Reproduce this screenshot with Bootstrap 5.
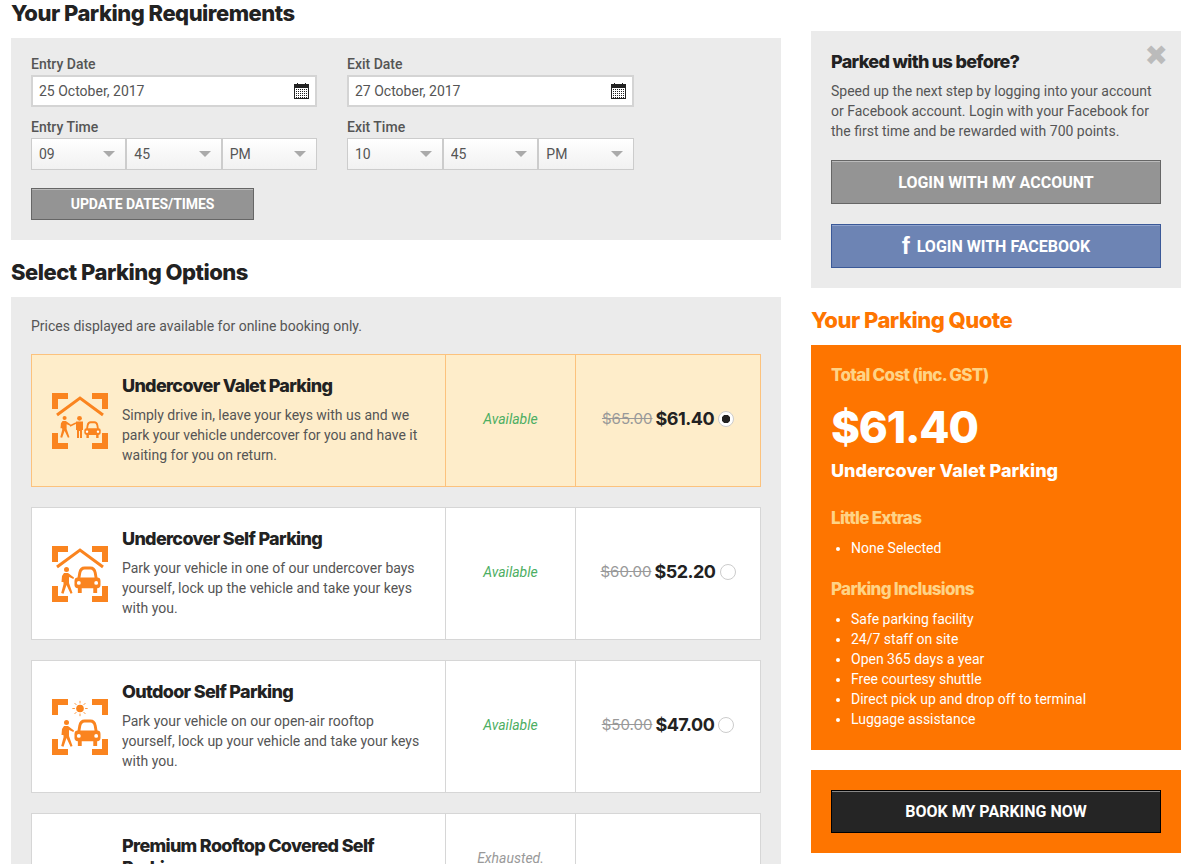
<!DOCTYPE html>
<html lang="en">
<head>
    <meta charset="UTF-8">
    <meta name="viewport" content="width=device-width, initial-scale=1.0">
    <title>Select Parking Options</title>
    <link rel="stylesheet" href="https://cdn.jsdelivr.net/npm/bootstrap@5.3.3/dist/css/bootstrap.min.css">
    <style>
        html, body { height: 864px; overflow: hidden; }
        body { font-family: Roboto, "Liberation Sans", sans-serif; font-size: 14px; line-height: 20px; color: #555; background: #fff; }
        .svg-defs { position: absolute; width: 0; height: 0; }
        .page-wrap { display: flex; gap: 30px; padding-left: 11px; width: 1181px; }
        .main-col { width: 770px; flex: none; }
        .side-col { width: 370px; flex: none; padding-top: 31px; }

        .head-font { font-family: Inter, "Liberation Sans", sans-serif; font-weight: 800; color: #222; letter-spacing: -.5px; margin: 0; }
        .sec-title { font-size: 22px; line-height: 26px; }
        .sec-first { margin-bottom: 12px; }
        .sec-next { margin: 19px 0 12px; }
        .grey-panel { background: #ebebeb; padding: 20px; }

        .req-panel { height: 202px; padding-top: 16px; }
        .req-grid { display: flex; gap: 30px; }
        .req-field { width: 286px; }
        .req-field:last-child { width: 287px; }
        .req-label { font-weight: 500; color: #555; margin: 0 0 1px; display: block; line-height: 20px; }
        .date-box { position: relative; margin-bottom: 10px; }
        .date-box .form-control { height: 32px; border: 2px solid #d4d4d4; border-radius: 0; padding: 0 6px; font-size: 14px; color: #555; }
        .cal-icon { position: absolute; right: 8px; top: 8px; }
        .time-row { display: flex; }
        .time-row .form-select { height: 32px; border: 1px solid #ccc; border-radius: 0; padding: 0 7px; font-size: 14px; color: #555; flex: 1 1 0; min-width: 0;
            background-color: #fff;
            background-image: url("data:image/svg+xml,%3Csvg xmlns='http://www.w3.org/2000/svg' width='12' height='6'%3E%3Cpath d='M0 0h12L6 6z' fill='%23aaa'/%3E%3C/svg%3E"), linear-gradient(#fff, #f1f1f1);
            background-repeat: no-repeat; background-position: right 10px center, 0 0; background-size: 12px 6px, 100% 100%; }

        .act-btn { border-radius: 0; color: #fff; font-family: Roboto, sans-serif; font-weight: 700; text-transform: uppercase; display: block; text-align: center; padding: 0; }
        .act-btn:hover { color: #fff; }
        .btn-grey { background: #949494; border: 1px solid #666; box-shadow: inset 0 1px 0 #bbb; }
        .btn-grey:hover { background: #888; border-color: #666; }
        .btn-update { width: 223px; height: 32px; font-size: 14px; margin-top: 18px; letter-spacing: -.1px; }
        .btn-wide { width: 330px; height: 44px; font-size: 16px; padding-top: 1px; }
        .btn-fb { background: #6d84b4; border: 1px solid #3b5998; margin-top: 20px; box-shadow: inset 0 1px 0 #8fa3cc; }
        .btn-fb:hover { background: #627aac; border-color: #3b5998; }
        .fb-f { font-family: "Liberation Sans", sans-serif; font-size: 24px; line-height: 1; margin-right: 7px; vertical-align: -2px; text-transform: none; }
        .btn-book { background: #252525; border: 1px solid #000; box-shadow: inset 0 1px 0 #888; height: 43px; }
        .btn-book:hover { background: #333; border-color: #000; }

        .note-text { margin: 0 0 19px; line-height: 18px; }
        .opt-card { display: flex; background: #fff; border: 1px solid #d6d6d6; height: 133px; margin-bottom: 20px; }
        .opt-card.picked { background: #feedca; border-color: #fcc27d; }
        .opt-info { width: 413px; flex: none; display: flex; align-items: center; gap: 14px; padding: 0 20px 2px; }
        .opt-icon { flex: none; margin-top: 2px; }
        .opt-title { font-size: 18px; line-height: 22px; margin-bottom: 8px; letter-spacing: -.7px; }
        .opt-desc { margin: 0; }
        .opt-status { width: 130px; flex: none; display: flex; align-items: center; justify-content: center; border-left: 1px solid #d6d6d6; font-style: italic; color: #4cae62; padding-bottom: 4px; }
        .opt-price { flex: 1 1 auto; display: flex; align-items: center; justify-content: center; border-left: 1px solid #d6d6d6; padding-bottom: 4px; }
        .picked .opt-status, .picked .opt-price { border-left-color: #fcc27d; }
        .old-price { font-family: Inter, sans-serif; font-size: 15px; color: #999; text-decoration: line-through; margin-right: 3px; }
        .new-price { font-family: Inter, sans-serif; font-weight: 700; font-size: 18px; color: #222; letter-spacing: -.5px; }
        .opt-radio { width: 16px; height: 16px; margin: 0 0 0 4px; border: 1px solid #ccc; flex: none; }
        .opt-radio:checked { background-color: #fff; border-color: #ccc; background-image: radial-gradient(circle, #222 0 4px, transparent 4.5px); }
        .tall-card { height: 156px; }
        .tall-card .opt-status { color: #999; padding-bottom: 66px; }
        .tall-card .opt-info { align-items: flex-start; padding-top: 21px; }
        .tall-card .opt-icon { margin-top: 29px; }

        .login-panel { position: relative; height: 257px; padding-top: 20px; }
        .login-title { font-size: 18px; line-height: 22px; margin-bottom: 8px; letter-spacing: -.7px; }
        .login-text { margin: 0 0 19px; }
        .close-mark { position: absolute; right: 13px; top: 11px; font-size: 28px; line-height: 28px; color: #bbb; font-family: "DejaVu Sans", sans-serif; }
        .quote-title { color: #fe7500; font-size: 22px; line-height: 26px; margin: 19px 0 12px; }
        .quote-panel { background: #fe7500; color: #fff; padding: 20px; }
        .quote-sub { color: #fed386; font-size: 17px; line-height: 22px; letter-spacing: -.7px; }
        .quote-amount { color: #fff; font-size: 44px; line-height: 52px; margin-top: 15px; letter-spacing: -1.2px; }
        .quote-name { color: #fff; font-size: 18px; line-height: 24px; margin-top: 6px; letter-spacing: 0; }
        .quote-list { margin: 9px 0 0; padding-left: 20px; }
        .extra-head { margin-top: 24px; }
        .incl-head { margin-top: 20px; }
        .quote-body { height: 405px; padding-top: 19px; }
        .book-panel { margin-top: 20px; height: 83px; }
    </style>
</head>
<body>
    <svg class="svg-defs">
        <defs>
            <symbol id="corners" viewBox="0 0 56 56">
                <path d="M0 0H16V6H6V16H0Z M56 0H40V6H50V16H56Z M0 56H16V50H6V40H0Z M56 56H40V50H50V40H56Z" fill="#fa841f"/>
            </symbol>
            <symbol id="walker" viewBox="0 0 14 27">
                <g fill="#fa841f">
                    <circle cx="6.500" cy="2.500" r="2.500"/>
                    <path d="M4 6H8L14 10.500 13.400 12 9 10V16L12.500 26 10.600 26.800 6.500 18 3.500 26.800 1.200 26 3.600 17 3.400 15 1.500 15 2 9Z"/>
                </g>
            </symbol>
            <symbol id="car" viewBox="0 0 28 28">
                <path d="M5 13 6 7Q7 2 11 2H17Q21 2 22 7L23 13" fill="none" stroke="#fa841f" stroke-width="3"/>
                <rect x="0.5" y="12" width="27" height="11" rx="3.5" fill="#fa841f"/>
                <rect x="4" y="22" width="4" height="6" fill="#fa841f"/>
                <rect x="20" y="22" width="4" height="6" fill="#fa841f"/>
                <circle cx="5" cy="17.5" r="2" fill="#fff"/>
                <circle cx="23" cy="17.5" r="2" fill="#fff"/>
            </symbol>
            <symbol id="sun" viewBox="0 0 20 20">
                <circle cx="10" cy="10" r="4.500" fill="#fa841f"/>
                <path d="M10 1v3M10 16v3M1 10h3M16 10h3M3.600 3.600l2.200 2.200M14.200 14.200l2.200 2.200M3.600 16.400l2.200-2.200M14.200 5.800l2.200-2.200" stroke="#fa841f" stroke-width="1"/>
            </symbol>
            <pattern id="cal-dots" width="2" height="2" patternUnits="userSpaceOnUse">
                <rect width="1" height="1" fill="#222"/>
            </pattern>
        </defs>
    </svg>

    <div class="page-wrap">
        <div class="main-col">
            <h2 class="head-font sec-title sec-first">Your Parking Requirements</h2>
            <div class="grey-panel req-panel">
                <div class="req-grid">
                    <div class="req-field">
                        <label class="req-label">Entry Date</label>
                        <div class="date-box">
                            <input class="form-control" type="text" value="25 October, 2017">
                            <svg class="cal-icon" width="15" height="16" viewBox="0 0 15 16"><rect x=".5" y="1.500" width="14" height="14" fill="#fff" stroke="#222"/><rect x="1" y="2" width="13" height="3" fill="#222"/><rect x="3" y="0" width="1" height="3" fill="#222"/><rect x="11" y="0" width="1" height="3" fill="#222"/><rect x="2" y="6" width="11" height="9" fill="url(#cal-dots)"/></svg>
                        </div>
                        <label class="req-label">Entry Time</label>
                        <div class="time-row">
                            <select class="form-select"><option>09</option></select>
                            <select class="form-select"><option>45</option></select>
                            <select class="form-select"><option>PM</option></select>
                        </div>
                    </div>
                    <div class="req-field">
                        <label class="req-label">Exit Date</label>
                        <div class="date-box">
                            <input class="form-control" type="text" value="27 October, 2017">
                            <svg class="cal-icon" width="15" height="16" viewBox="0 0 15 16"><rect x=".5" y="1.500" width="14" height="14" fill="#fff" stroke="#222"/><rect x="1" y="2" width="13" height="3" fill="#222"/><rect x="3" y="0" width="1" height="3" fill="#222"/><rect x="11" y="0" width="1" height="3" fill="#222"/><rect x="2" y="6" width="11" height="9" fill="url(#cal-dots)"/></svg>
                        </div>
                        <label class="req-label">Exit Time</label>
                        <div class="time-row">
                            <select class="form-select"><option>10</option></select>
                            <select class="form-select"><option>45</option></select>
                            <select class="form-select"><option>PM</option></select>
                        </div>
                    </div>
                </div>
                <button class="btn act-btn btn-grey btn-update">Update Dates/Times</button>
            </div>

            <h2 class="head-font sec-title sec-next">Select Parking Options</h2>
            <div class="grey-panel">
                <p class="note-text">Prices displayed are available for online booking only.</p>

                <div class="opt-card picked">
                    <div class="opt-info">
                        <svg class="opt-icon" width="56" height="56" viewBox="0 0 56 56">
                            <use href="#corners"/>
                            <path d="M5 22 28 5 51 22" fill="none" stroke="#fa841f" stroke-width="3"/>
                            <use href="#walker" x="7" y="23" width="12" height="22"/>
                            <g fill="#fa841f"><circle cx="27.500" cy="25.300" r="2.400"/><path d="M24 28.500H31V37H30V45H28V38H27V45H25V37H24Z"/></g>
                            <path d="M18 33 24 30" stroke="#fa841f" stroke-width="1.500"/>
                            <use href="#car" x="32" y="28" width="17" height="17"/>
                        </svg>
                        <div>
                            <h3 class="head-font opt-title">Undercover Valet Parking</h3>
                            <p class="opt-desc">Simply drive in, leave your keys with us and we park your vehicle undercover for you and have it waiting for you on return.</p>
                        </div>
                    </div>
                    <div class="opt-status">Available</div>
                    <div class="opt-price">
                        <span class="old-price">$65.00</span>
                        <span class="new-price">$61.40</span>
                        <input class="form-check-input opt-radio" type="radio" name="opt" checked>
                    </div>
                </div>

                <div class="opt-card">
                    <div class="opt-info">
                        <svg class="opt-icon" width="56" height="56" viewBox="0 0 56 56">
                            <use href="#corners"/>
                            <path d="M5 21 28 4 51 21" fill="none" stroke="#fa841f" stroke-width="3"/>
                            <use href="#walker" x="8" y="21" width="14" height="27"/>
                            <use href="#car" x="22" y="20" width="27" height="27"/>
                        </svg>
                        <div>
                            <h3 class="head-font opt-title">Undercover Self Parking</h3>
                            <p class="opt-desc">Park your vehicle in one of our undercover bays yourself, lock up the vehicle and take your keys with you.</p>
                        </div>
                    </div>
                    <div class="opt-status">Available</div>
                    <div class="opt-price">
                        <span class="old-price">$60.00</span>
                        <span class="new-price">$52.20</span>
                        <input class="form-check-input opt-radio" type="radio" name="opt">
                    </div>
                </div>

                <div class="opt-card">
                    <div class="opt-info">
                        <svg class="opt-icon" width="56" height="56" viewBox="0 0 56 56">
                            <use href="#corners"/>
                            <use href="#sun" x="19.500" y="1" width="17" height="17"/>
                            <use href="#walker" x="8" y="21" width="14" height="27"/>
                            <use href="#car" x="22" y="20" width="27" height="27"/>
                        </svg>
                        <div>
                            <h3 class="head-font opt-title">Outdoor Self Parking</h3>
                            <p class="opt-desc">Park your vehicle on our open-air rooftop yourself, lock up your vehicle and take your keys with you.</p>
                        </div>
                    </div>
                    <div class="opt-status">Available</div>
                    <div class="opt-price">
                        <span class="old-price">$50.00</span>
                        <span class="new-price">$47.00</span>
                        <input class="form-check-input opt-radio" type="radio" name="opt">
                    </div>
                </div>

                <div class="opt-card tall-card">
                    <div class="opt-info">
                        <svg class="opt-icon" width="56" height="56" viewBox="0 0 56 56">
                            <use href="#corners"/>
                        </svg>
                        <div>
                            <h3 class="head-font opt-title">Premium Rooftop Covered Self Parking</h3>
                        </div>
                    </div>
                    <div class="opt-status">Exhausted.</div>
                    <div class="opt-price"></div>
                </div>
            </div>
        </div>

        <div class="side-col">
            <div class="grey-panel login-panel">
                <span class="close-mark">&#10006;</span>
                <h4 class="head-font login-title">Parked with us before?</h4>
                <p class="login-text">Speed up the next step by logging into your account or Facebook account. Login with your Facebook for the first time and be rewarded with 700 points.</p>
                <button class="btn act-btn btn-grey btn-wide">Login with my account</button>
                <button class="btn act-btn btn-fb btn-wide"><span class="fb-f">f</span>Login with Facebook</button>
            </div>

            <h2 class="head-font quote-title">Your Parking Quote</h2>
            <div class="quote-panel quote-body">
                <div class="head-font quote-sub">Total Cost (inc. GST)</div>
                <div class="head-font quote-amount">$61.40</div>
                <div class="head-font quote-name">Undercover Valet Parking</div>
                <div class="head-font quote-sub extra-head">Little Extras</div>
                <ul class="quote-list">
                    <li>None Selected</li>
                </ul>
                <div class="head-font quote-sub incl-head">Parking Inclusions</div>
                <ul class="quote-list">
                    <li>Safe parking facility</li>
                    <li>24/7 staff on site</li>
                    <li>Open 365 days a year</li>
                    <li>Free courtesy shuttle</li>
                    <li>Direct pick up and drop off to terminal</li>
                    <li>Luggage assistance</li>
                </ul>
            </div>
            <div class="quote-panel book-panel">
                <button class="btn act-btn btn-book btn-wide">Book my parking now</button>
            </div>
        </div>
    </div>
</body>
</html>
